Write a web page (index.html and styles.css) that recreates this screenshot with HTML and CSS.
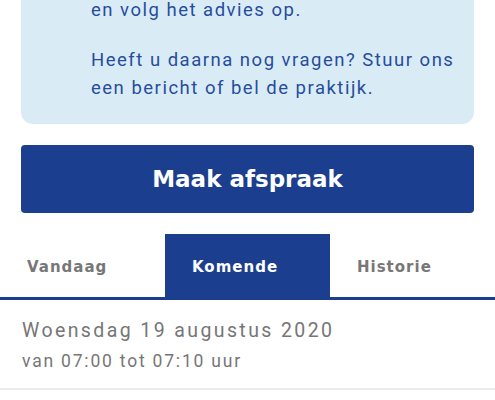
FILE: index.html
```html
<!DOCTYPE html>
<html lang="nl">
<head>
  <meta charset="UTF-8">
  <meta name="viewport" content="width=device-width, initial-scale=1.0">
  <title>Afspraken</title>
  <link rel="stylesheet" href="styles.css">
</head>
<body>
  <div class="page">
    <div class="advice">
      <p>en volg het advies op.</p>
      <p>Heeft u daarna nog vragen? Stuur ons een bericht of bel de praktijk.</p>
    </div>

    <button class="book-btn">Maak afspraak</button>
  </div>

  <nav class="tabs">
    <a class="tab">Vandaag</a>
    <a class="tab active">Komende</a>
    <a class="tab">Historie</a>
  </nav>

  <ul class="appointments">
    <li class="appointment">
      <div class="appointment-date">Woensdag 19 augustus 2020</div>
      <div class="appointment-time">van 07:00 tot 07:10 uur</div>
    </li>
  </ul>
</body>
</html>
```

FILE: styles.css
```css
body {
  margin: 0;
  background-color: #fff;
  font-family: Roboto, 'Noto Sans', sans-serif;
  overflow: hidden;
}

.page {
  padding: 0 21px;
}

.advice {
  margin-top: -4px;
  background-color: #d9ecf6;
  color: #274c9d;
  font-size: 18.5px;
  letter-spacing: 1.5px;
  line-height: 28px;
  padding: 0 12px 22px 70px;
  border-radius: 0 0 12px 12px;
}

.advice p {
  margin: 0;
}

.advice p + p {
  margin-top: 22px;
}

.book-btn {
  display: block;
  width: 100%;
  height: 68px;
  margin-top: 21px;
  border: none;
  border-radius: 4px;
  background-color: #1c3e8f;
  color: #fff;
  font-family: 'DejaVu Sans', sans-serif;
  font-weight: 700;
  font-size: 23px;
  cursor: pointer;
}

.tabs {
  display: grid;
  grid-template-columns: repeat(3, 1fr);
  margin-top: 21px;
  border-bottom: 3px solid #1c3e8f;
}

.tab {
  height: 63px;
  display: flex;
  align-items: center;
  padding-left: 27px;
  padding-top: 2px;
  box-sizing: border-box;
  font-family: 'DejaVu Sans', sans-serif;
  font-weight: 700;
  font-size: 15px;
  letter-spacing: 1px;
  color: #777;
}

.tab.active {
  background-color: #1c3e8f;
  color: #fff;
}

.appointments {
  list-style: none;
  margin: 0;
  padding: 0;
}

.appointment {
  padding: 17px 22px 15px;
  border-bottom: 2px solid #ebebeb;
  color: #767676;
}

.appointment-date {
  font-size: 19.5px;
  letter-spacing: 2.4px;
  line-height: 28px;
}

.appointment-time {
  margin-top: 4px;
  font-size: 17.5px;
  letter-spacing: 1.8px;
  line-height: 24px;
}
```
